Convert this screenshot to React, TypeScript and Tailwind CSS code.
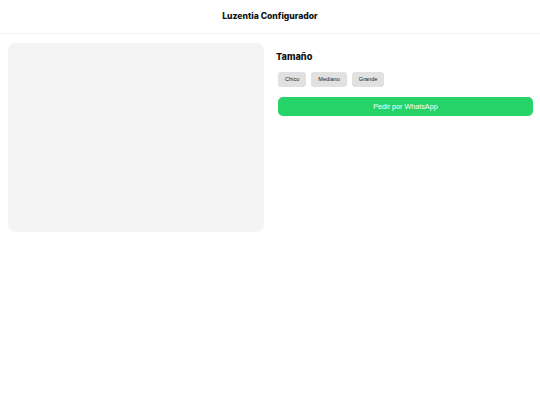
export default function App() {
  return (
    <div className="min-h-screen bg-white" style={{ fontFamily: '"Liberation Sans", Arial, sans-serif' }}>
      <header className="h-[34px] flex items-center justify-center border-b border-[#f2f2f2]">
        <h1 className="text-[8.6px] font-extrabold text-[#111]" style={{ fontFamily: 'Inter, "Noto Sans", sans-serif' }}>
          Luzentia Configurador
        </h1>
      </header>
      <main className="grid grid-cols-2 gap-3 px-2 pt-[9px]">
        <div className="h-[189px] rounded-[7px] bg-[#f4f4f4]" />
        <div>
          <h2 className="mt-[7px] text-[9.2px] font-extrabold text-[#111]" style={{ fontFamily: 'Inter, "Noto Sans", sans-serif' }}>
            Tamaño
          </h2>
          <div className="mt-[8px] ml-[2px] flex gap-[5px]">
            {['Chico', 'Mediano', 'Grande'].map((s) => (
              <button key={s} className="h-[15px] px-[7px] rounded-[3px] bg-[#e1e1e1] text-[5.6px] text-[#222] leading-none">
                {s}
              </button>
            ))}
          </div>
          <button className="mt-[10px] ml-[2px] w-[255px] h-[19px] rounded-[5px] bg-[#25d366] text-white text-[7.2px] leading-none">
            Pedir por WhatsApp
          </button>
        </div>
      </main>
    </div>
  );
}
